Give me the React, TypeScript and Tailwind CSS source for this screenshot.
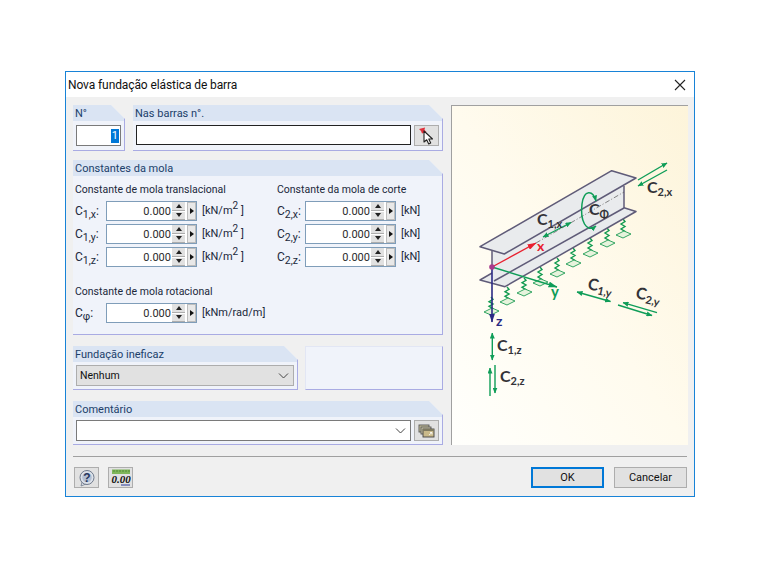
// App.tsx — Nova fundação elástica de barra
import type { ReactNode } from 'react';

function Panel({ title, className, children }: { title?: string; className: string; children?: ReactNode }) {
  return (
    <div className={`bg-[#f0f3fa] border-r border-b border-[#a9abe3] [clip-path:polygon(0_0,calc(100%-14px)_0,100%_14px,100%_100%,0_100%)] ${className}`}>
      {title && <div className="h-4 pl-[2px] bg-[#dae4f3] text-[#20406a] leading-[17px]">{title}</div>}
      {children}
    </div>
  );
}

function Spin({ value = '0.000' }: { value?: string }) {
  return (
    <div className="flex items-center w-[91px] h-[20px] bg-white border border-[#7f9db9]">
      <span className="flex-1 text-right text-[#2b2b2b] leading-[18px] pt-px">{value}</span>
      <div className="flex flex-col ml-[1px] w-[13px] h-[18px] gap-[1px]">
        <div className="flex-1 flex items-center justify-center bg-[#e1e1e1] border-b border-[#adadad]">
          <div className="w-0 h-0 border-x-[3.5px] border-x-transparent border-b-[4px] border-b-[#222]" />
        </div>
        <div className="flex-1 flex items-center justify-center bg-[#e1e1e1] border-b border-[#adadad]">
          <div className="w-0 h-0 border-x-[3.5px] border-x-transparent border-t-[4px] border-t-[#222]" />
        </div>
      </div>
      <div className="flex items-center justify-center ml-[2px] w-[9px] h-[18px] bg-[#e8e8e8] border border-[#bdbdbd]">
        <div className="w-0 h-0 border-y-[3.5px] border-y-transparent border-l-[4px] border-l-[#111]" />
      </div>
    </div>
  );
}

function Row({ sym, sub, unit, labelW }: { sym: string; sub: string; unit: ReactNode; labelW: string }) {
  return (
    <div className="flex items-center h-[20px]">
      <span className={`${labelW} text-[12px] text-[#20283a]`}>
        {sym}
        <sub className="text-[10.5px]">{sub}</sub>:
      </span>
      <Spin />
      <span className="ml-[5px] pt-px text-[#20283a]">{unit}</span>
    </div>
  );
}

const KN_M2 = (
  <>
    [kN/m<sup className="text-[10px]">2</sup> ]
  </>
);

function Chevron() {
  return (
    <svg width="11" height="6" viewBox="0 0 11 6" fill="none" stroke="#444" strokeWidth="1">
      <path d="M1 0.5 L5.5 5 L10 0.5" />
    </svg>
  );
}

function ToolBtn({ children, className = '' }: { children: ReactNode; className?: string }) {
  return (
    <div className={`flex items-center justify-center w-[25px] h-[21px] bg-[#e1e1e1] border border-[#adadad] ${className}`}>
      {children}
    </div>
  );
}

function Spring({ x, y1, y2 }: { x: number; y1: number; y2: number }) {
  const n = 6;
  const step = (y2 - y1) / n;
  let d = `M${x} ${y1}`;
  for (let i = 1; i < n; i++) d += ` L${x + (i % 2 ? 2 : -2)} ${y1 + i * step}`;
  d += ` L${x} ${y2}`;
  const pad = `${x - 7},${y2 + 1} ${x + 1},${y2 - 3} ${x + 8},${y2} ${x},${y2 + 4}`;
  return (
    <g>
      <path d={d} fill="none" stroke="#119a50" strokeWidth="1.4" />
      <polygon points={pad} fill="#e6f3dc" stroke="#1f9c55" strokeWidth="0.9" />
    </g>
  );
}

function Lbl({ x, y, sub, rotate }: { x: number; y: number; sub: string; rotate?: number }) {
  return (
    <text
      x={x}
      y={y}
      fill="#333338"
      className="font-[Lato,sans-serif] font-bold text-[16px]"
      transform={rotate ? `rotate(${rotate} ${x} ${y})` : undefined}
    >
      C
      <tspan dy="3" className="text-[11px]">{sub}</tspan>
    </text>
  );
}

function Diagram() {
  const springs = [
    [491, 297, 311],
    [507, 287, 301],
    [524, 278, 292],
    [540, 267, 282],
    [557, 258, 273],
    [573, 248, 263],
    [590, 238, 253],
    [607, 228, 243],
    [623, 219, 234],
  ];
  const g = '#0f9d58';
  return (
    <svg width="237" height="340" viewBox="451 105 237 340" className="block">
      <defs>
        <marker id="gh" markerUnits="userSpaceOnUse" markerWidth="6" markerHeight="5" refX="5.5" refY="2.5" orient="auto-start-reverse">
          <path d="M0 0 L6 2.5 L0 5 Z" fill={g} />
        </marker>
        <marker id="rh" markerUnits="userSpaceOnUse" markerWidth="9" markerHeight="6" refX="8.5" refY="3" orient="auto">
          <path d="M0 0 L9 3 L0 6 Z" fill="#e8202f" />
        </marker>
        <marker id="yh" markerUnits="userSpaceOnUse" markerWidth="9" markerHeight="6" refX="8.5" refY="3" orient="auto">
          <path d="M0 0 L9 3 L0 6 Z" fill={g} />
        </marker>
        <marker id="zh" markerUnits="userSpaceOnUse" markerWidth="9" markerHeight="6" refX="8.5" refY="3" orient="auto">
          <path d="M0 0 L9 3 L0 6 Z" fill="#2b2a84" />
        </marker>
      </defs>
      {springs.map(([x, a, b]) => (
        <Spring key={x} x={x} y1={a} y2={b} />
      ))}
      {/* perfil I */}
      <polygon points="480,280 612,204 636,211.5 505,286.7" fill="#e9ebed" stroke="#5f5b78" strokeWidth="1.5" strokeLinejoin="round" />
      <polygon points="492,252 624,185 624,208 492,283" fill="#e9ebed" />
      <line x1="494" y1="281" x2="624" y2="208" stroke="#5f5b78" strokeWidth="1.5" />
      <polygon points="480,246.7 611.7,170.7 636,178 504.3,254" fill="#e9ebed" stroke="#5f5b78" strokeWidth="1.5" strokeLinejoin="round" />
      <line x1="492" y1="251" x2="492" y2="268" stroke="#5f5b78" strokeWidth="1.5" />
      <line x1="624" y1="186" x2="624" y2="208" stroke="#5f5b78" strokeWidth="1.5" />
      <line x1="536" y1="243" x2="624" y2="192" stroke="#555" strokeWidth="0.7" strokeDasharray="5 2 1 2" />
      {/* eixos */}
      <line x1="492" y1="267" x2="536" y2="243" stroke="#e8202f" strokeWidth="1.4" markerEnd="url(#rh)" />
      <line x1="492" y1="267" x2="557" y2="287" stroke={g} strokeWidth="1.4" markerEnd="url(#yh)" />
      <line x1="492" y1="267" x2="492" y2="322" stroke="#2b2a84" strokeWidth="1.6" markerEnd="url(#zh)" />
      <circle cx="492" cy="267" r="2.8" fill="#a83a8c" />
      <text x="537" y="251" fill="#e8202f" className="font-[Lato,sans-serif] font-bold text-[14px]">x</text>
      <text x="551" y="297" fill={g} className="font-[Lato,sans-serif] font-bold text-[15px]">y</text>
      <text x="496" y="326" fill="#2b2a84" className="font-[Lato,sans-serif] font-bold text-[14px]">z</text>
      {/* molas */}
      <line x1="638" y1="180" x2="667" y2="163" stroke={g} strokeWidth="1.4" markerEnd="url(#gh)" />
      <line x1="667" y1="170" x2="638" y2="186" stroke={g} strokeWidth="1.4" markerEnd="url(#gh)" />
      <line x1="543" y1="237" x2="571" y2="222.5" stroke={g} strokeWidth="1.4" markerStart="url(#gh)" markerEnd="url(#gh)" />
      <path d="M596 201 C593 190 584 189 582 204 C580 220 586 234 596 226" fill="none" stroke={g} strokeWidth="1.5" markerStart="url(#gh)" markerEnd="url(#gh)" />
      <line x1="577" y1="292" x2="610.5" y2="301.5" stroke={g} strokeWidth="1.4" markerStart="url(#gh)" markerEnd="url(#gh)" />
      <line x1="657" y1="312.7" x2="623" y2="302.7" stroke={g} strokeWidth="1.4" markerEnd="url(#gh)" />
      <line x1="618" y1="305" x2="652" y2="315.5" stroke={g} strokeWidth="1.4" markerEnd="url(#gh)" />
      <line x1="492.3" y1="333" x2="492.3" y2="360" stroke={g} strokeWidth="1.4" markerStart="url(#gh)" markerEnd="url(#gh)" />
      <line x1="490" y1="396" x2="490" y2="368" stroke={g} strokeWidth="1.4" markerEnd="url(#gh)" />
      <line x1="495" y1="365" x2="495" y2="393" stroke={g} strokeWidth="1.4" markerEnd="url(#gh)" />
      {/* rótulos */}
      <Lbl x={647} y={193} sub="2,x" />
      <Lbl x={537} y={225} sub="1,x" />
      <Lbl x={589} y={215} sub="Φ" />
      <Lbl x={587} y={289} sub="1,y" rotate={12} />
      <Lbl x={635} y={298} sub="2,y" rotate={12} />
      <Lbl x={497} y={351} sub="1,z" />
      <Lbl x={500} y={382} sub="2,z" />
    </svg>
  );
}

export default function App() {
  return (
    <div className="min-h-[570px] bg-white pt-[71px] pl-[65px] font-[Roboto,sans-serif] text-[11px]">
      <div className="w-[630px] h-[426px] flex flex-col bg-[#f0f0f0] border border-[#1883d7]">
        <div className="flex items-center justify-between h-[25px] bg-white pl-[2px] pr-[8px] text-[12px] tracking-[-0.1px] text-[#111]">
          <span>Nova fundação elástica de barra</span>
          <svg width="12" height="12" viewBox="0 0 12 12" stroke="#222" strokeWidth="1.1">
            <path d="M1 1 L11 11 M11 1 L1 11" />
          </svg>
        </div>

        <div className="flex gap-2 pt-2 pl-[7px]">
          <div className="w-[370px] flex flex-col">
            <div className="flex gap-2 h-[46px]">
              <Panel title="N°" className="w-[52px]">
                <div className="pt-1 pl-[3px]">
                  <div className="flex items-center justify-end w-[45px] h-[21px] bg-white border border-[#7a7a7a] pr-[1px]">
                    <span className="bg-[#0078d7] text-white px-[1px] leading-[14px]">1</span>
                  </div>
                </div>
              </Panel>
              <Panel title="Nas barras n°." className="w-[310px]">
                <div className="flex gap-[3px] pt-1 pl-[3px]">
                  <div className="w-[275px] h-[20px] bg-white border border-[#222]" />
                  <ToolBtn>
                    <svg width="17" height="18" viewBox="0 0 17 18">
                      <path d="M1 2 L7 0.5 L6.5 3 L8.5 5 L4 6.5 L3 4 Z" fill="#e0303c" />
                      <path d="M6 4 L6 15 L8.7 12.8 L10.7 17 L12.7 16 L10.8 12 L14.5 12 Z" fill="#fff" stroke="#222" strokeWidth="1.1" strokeLinejoin="round" />
                    </svg>
                  </ToolBtn>
                </div>
              </Panel>
            </div>

            <Panel title="Constantes da mola" className="mt-[9px] h-[175px]">
              <div className="pl-[2px] pt-[6px] text-[#20283a]">
                <div className="flex">
                  <div className="w-[202px]">
                    <div className="h-[14px] leading-[16px] mb-[5px] text-[10.5px]">Constante de mola translacional</div>
                    <div className="flex flex-col gap-[3px]">
                      <Row sym="C" sub="1,x" unit={KN_M2} labelW="w-[31px]" />
                      <Row sym="C" sub="1,y" unit={KN_M2} labelW="w-[31px]" />
                      <Row sym="C" sub="1,z" unit={KN_M2} labelW="w-[31px]" />
                    </div>
                  </div>
                  <div>
                    <div className="h-[14px] leading-[16px] mb-[5px] text-[10.5px]">Constante da mola de corte</div>
                    <div className="flex flex-col gap-[3px]">
                      <Row sym="C" sub="2,x" unit="[kN]" labelW="w-[28px]" />
                      <Row sym="C" sub="2,y" unit="[kN]" labelW="w-[28px]" />
                      <Row sym="C" sub="2,z" unit="[kN]" labelW="w-[28px]" />
                    </div>
                  </div>
                </div>
                <div className="mt-[17px] h-[14px] leading-[16px] mb-[5px] text-[10.5px]">Constante de mola rotacional</div>
                <Row sym="C" sub="φ" unit="[kNm/rad/m]" labelW="w-[31px]" />
              </div>
            </Panel>

            <div className="flex gap-[7px] mt-[11px] h-[44px]">
              <Panel title="Fundação ineficaz" className="w-[225px]">
                <div className="pt-[3px] pl-[3px]">
                  <div className="flex items-center justify-between w-[218px] h-[21px] bg-[#e1e1e1] border border-[#adadad] pl-[3px] pr-[4px] pt-px text-[10.5px] text-[#111]">
                    Nenhum
                    <Chevron />
                  </div>
                </div>
              </Panel>
              <div className="w-[138px] bg-[#f0f3fa] border border-[#e2e6f4] border-r-[#a9abe3] border-b-[#a9abe3]" />
            </div>

            <Panel title="Comentário" className="mt-[11px] h-[44px]">
              <div className="flex gap-[3px] pt-[3px] pl-[3px]">
                <div className="flex items-center justify-end w-[335px] h-[21px] bg-white border border-[#7a7a7a] pr-[4px]">
                  <Chevron />
                </div>
                <ToolBtn>
                  <svg width="17" height="14" viewBox="0 0 17 14">
                    <rect x="1" y="1" width="10" height="7" fill="#c8c29c" stroke="#555" strokeWidth="0.9" />
                    <rect x="3" y="3" width="10" height="7" fill="#cfc9a6" stroke="#555" strokeWidth="0.9" />
                    <rect x="5" y="5" width="11" height="8" fill="#c9b98a" stroke="#444" strokeWidth="0.9" />
                    <rect x="5" y="5" width="11" height="2" fill="#7f7a60" />
                    <path d="M11 11 L14 8.5 M14 8.5 H12 M14 8.5 V10.5" stroke="#fff" strokeWidth="0.8" fill="none" />
                  </svg>
                </ToolBtn>
              </div>
            </Panel>
          </div>

          <div className="w-[237px] h-[340px] border-t border-l border-[#a0a0a0] bg-gradient-to-bl from-[#fdf4da] via-[#fffbee] to-[#fffffc] overflow-hidden">
            <div className="-mt-[1px] -ml-[1px]">
              <Diagram />
            </div>
          </div>
        </div>

        <div className="ml-[7px] mt-[11px] w-[614px] h-px bg-[#a0a0a0]" />

        <div className="flex justify-between items-center ml-[8px] mr-[7px] mt-[10px]">
          <div className="flex gap-[9px]">
            <ToolBtn>
              <svg width="18" height="18" viewBox="0 0 18 18">
                <path d="M4 13 L3 17 L8 15" fill="#dfe4ec" stroke="#6f7a8c" strokeWidth="0.8" />
                <circle cx="9" cy="8.5" r="7" fill="#dde2ea" stroke="#6f7a8c" strokeWidth="1" />
                <circle cx="9" cy="8.5" r="4.8" fill="#b3bfd2" />
                <text x="9" y="13" textAnchor="middle" fill="#26365e" className="font-[Liberation_Sans,sans-serif] font-bold text-[12px]">?</text>
              </svg>
            </ToolBtn>
            <ToolBtn>
              <svg width="20" height="17" viewBox="0 0 20 17">
                <rect x="1" y="0.5" width="18" height="4.5" fill="#7fb65a" />
                <path d="M3 1 V3 M6 1 V3 M9 1 V3 M12 1 V3 M15 1 V3 M18 1 V3" stroke="#3f7a2a" strokeWidth="0.7" />
                <text x="10" y="14" textAnchor="middle" fill="#111" className="font-[Liberation_Serif,serif] font-bold italic text-[11px]">0.00</text>
                <path d="M10 16 H19" stroke="#2a3a9a" strokeWidth="1" />
              </svg>
            </ToolBtn>
          </div>
          <div className="flex gap-[10px] text-[#111]">
            <div className="flex items-center justify-center w-[73px] h-[21px] pt-px bg-[#e1e1e1] border-2 border-[#0078d7]">OK</div>
            <div className="flex items-center justify-center w-[73px] h-[21px] pt-px bg-[#e1e1e1] border border-[#adadad]">Cancelar</div>
          </div>
        </div>
      </div>
    </div>
  );
}
